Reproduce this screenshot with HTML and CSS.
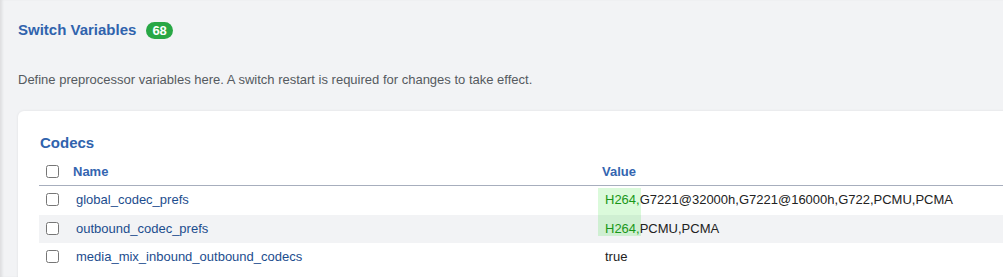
FILE: index.html
```html
<!DOCTYPE html>
<html>
<head>
<meta charset="utf-8">
<link rel="stylesheet" href="styles.css">
</head>
<body>
<div class="page">
  <div class="heading">
    <h1 class="title">Switch Variables</h1>
    <span class="badge">68</span>
  </div>
  <p class="desc">Define preprocessor variables here. A switch restart is required for changes to take effect.</p>
  <div class="card">
    <h2 class="group">Codecs</h2>
    <table class="vars">
      <thead>
        <tr>
          <th class="col-chk"><input type="checkbox" class="cb"></th>
          <th class="col-name">Name</th>
          <th class="col-value">Value</th>
        </tr>
      </thead>
      <tbody>
        <tr>
          <td class="col-chk"><input type="checkbox" class="cb"></td>
          <td class="col-name"><a class="var-link">global_codec_prefs</a></td>
          <td class="col-value"><span class="hl"></span><span class="match">H264,</span>G7221@32000h,G7221@16000h,G722,PCMU,PCMA</td>
        </tr>
        <tr class="alt">
          <td class="col-chk"><input type="checkbox" class="cb"></td>
          <td class="col-name"><a class="var-link">outbound_codec_prefs</a></td>
          <td class="col-value"><span class="match">H264,</span>PCMU,PCMA</td>
        </tr>
        <tr>
          <td class="col-chk"><input type="checkbox" class="cb"></td>
          <td class="col-name"><a class="var-link">media_mix_inbound_outbound_codecs</a></td>
          <td class="col-value">true</td>
        </tr>
      </tbody>
    </table>
  </div>
</div>
</body>
</html>
```
FILE: styles.css
```css
html, body {
  margin: 0;
  padding: 0;
}
body {
  background: #f2f3f5;
  font-family: "Liberation Sans", Arial, sans-serif;
  overflow: hidden;
  height: 277px;
}
.page {
  padding: 20px 0 0 18px;
  box-shadow: inset 3px 0 3px -1px rgba(0, 0, 0, 0.09);
  height: 277px;
  box-sizing: border-box;
  overflow: hidden;
}
.heading {
  display: flex;
  align-items: center;
  gap: 10px;
  height: 20px;
}
.title {
  margin: 0;
  font-size: 15px;
  line-height: 20px;
  font-weight: bold;
  color: #3063ad;
}
.badge {
  display: inline-block;
  background: #28a745;
  color: #fff;
  font-size: 13px;
  font-weight: bold;
  line-height: 17px;
  height: 17px;
  padding: 0 6px;
  border-radius: 9px;
  margin-top: 1px;
}
.desc {
  margin: 31px 0 0 0;
  font-size: 13px;
  line-height: 18px;
  color: #555a60;
}
.card {
  margin-top: 22px;
  margin-right: -40px;
  background: #fff;
  border-radius: 6px;
  box-shadow: 0 0 3px rgba(0, 0, 0, 0.08);
  padding: 22px 21px 10px 21px;
  height: 200px;
}
.group {
  margin: 0 0 4px 1px;
  font-size: 15px;
  line-height: 20px;
  font-weight: bold;
  color: #3063ad;
}
.vars {
  border-collapse: collapse;
  width: 100%;
  font-size: 13px;
}
.vars th {
  height: 28px;
  padding: 0;
  text-align: left;
  font-weight: bold;
  color: #3465b0;
  border-bottom: 1px solid #a7aebd;
  vertical-align: middle;
}
.vars td {
  height: 26px;
  padding: 0 0 2px 0;
  vertical-align: middle;
  color: #222;
}
.vars tbody tr:first-child td {
  height: 27px;
}
.vars tr.alt td {
  background: #f2f3f5;
}
.col-chk {
  width: 21px;
  padding-left: 7px !important;
}
.vars th.col-name {
  width: 523px;
  padding-left: 6px;
}
.vars td.col-name {
  padding-left: 9px;
}
.vars th.col-value {
  padding-left: 6px;
}
.vars td.col-value {
  padding-left: 9px;
  position: relative;
}
.cb {
  margin: 0;
  width: 13px;
  height: 13px;
  display: block;
}
.var-link {
  color: #1c4d8e;
  text-decoration: none;
}
.match {
  color: #1e8c1e;
}
.hl {
  position: absolute;
  z-index: 1;
  left: 2px;
  top: 2px;
  width: 43px;
  height: 48px;
  background: rgba(0, 220, 0, 0.14);
}
```
